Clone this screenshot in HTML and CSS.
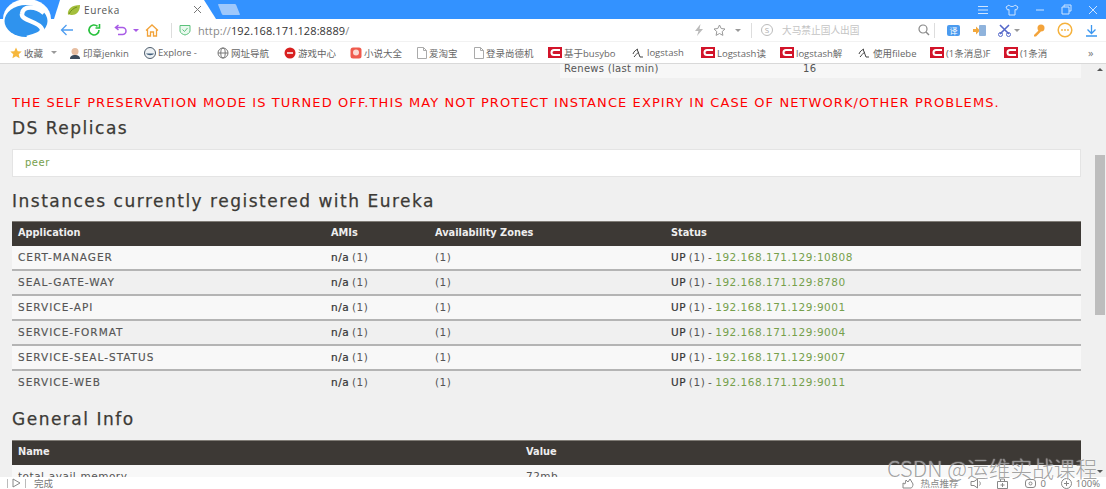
FILE: index.html
```html
<!DOCTYPE html>
<html lang="zh">
<head>
<meta charset="utf-8">
<title>Eureka</title>
<link rel="stylesheet" href="styles.css">
</head>
<body>
<div class="browser">
  <svg class="logo" viewBox="0 0 48 40" width="48" height="40"><ellipse cx="24" cy="19" rx="24" ry="20" fill="#fff"/><ellipse cx="23" cy="21" rx="21.500" ry="16" fill="#2f93ee"/><path d="M41 13C33 6 20 5 19 14 18 21 36 21 39 29 40 33 33 36 24 38" fill="none" stroke="#fff" stroke-width="4.500"/></svg>
  <header class="tabbar">
    <div class="tab">
      <svg class="tab-icon" viewBox="0 0 14 12" width="14" height="12"><path d="M1 11C0 5 5 1 13 1c0 7-4 10-8 10-2 0-3-1-4 0z" fill="#a4bf3c"/><path d="M2 10C4 6 7 4 10 3" stroke="#6f8f1e" fill="none"/></svg>
      <span class="tab-title">Eureka</span>
      <svg class="tab-close" viewBox="0 0 9 9" width="9" height="9"><path d="M1 1l7 7M8 1L1 8" stroke="#777" stroke-width="1"/></svg>
    </div>
    <div class="newtab"></div>
    <div class="window-controls">
      <svg viewBox="0 0 12 10" width="12" height="10"><path d="M1 1.500h10M1 5h10M1 8.500h10" stroke="#cfe5ff"/></svg>
      <svg viewBox="0 0 14 12" width="14" height="12"><path d="M4 1L1 3l1.500 3L4 5.500V11h6V5.500l1.500.5L13 3l-3-2c-1 2-5 2-6 0z" fill="none" stroke="#cfe5ff"/></svg>
      <svg viewBox="0 0 10 10" width="10" height="10"><path d="M1 5h8" stroke="#cfe5ff"/></svg>
      <svg viewBox="0 0 11 11" width="11" height="11"><path d="M3 3V1h7v6H8M1 3h7v7H1z" fill="none" stroke="#cfe5ff"/></svg>
      <svg viewBox="0 0 10 10" width="10" height="10"><path d="M1 1l8 8M9 1L1 9" stroke="#cfe5ff"/></svg>
    </div>
  </header>
  <nav class="toolbar">
    <div class="nav-icons">
      <svg viewBox="0 0 14 12" width="14" height="12"><path d="M13 6H2M6.500 1L1.500 6l5 5" fill="none" stroke="#4f9df0" stroke-width="1.300"/></svg>
      <svg viewBox="0 0 14 14" width="14" height="14"><path d="M12 7a5 5 0 1 1-1.500-3.600" fill="none" stroke="#27c13c" stroke-width="1.600"/><path d="M12.500 1v4h-4" fill="none" stroke="#27c13c" stroke-width="1.600"/></svg>
      <span class="undo"><svg viewBox="0 0 14 12" width="14" height="12"><path d="M4.500 1L1.500 3.500 4.500 6M2 3.500h6.500a3.500 3.500 0 0 1 0 7H4" fill="none" stroke="#a85be6" stroke-width="1.500"/></svg><i class="mini-arrow purple"></i></span>
      <svg class="home" viewBox="0 0 14 13" width="14" height="13"><path d="M1 6.500L7 1l6 5.500M2.500 5.500V12h3V8h3v4h3V5.500" fill="none" stroke="#f2a33a" stroke-width="1.300"/></svg>
    </div>
    <div class="address">
      <svg viewBox="0 0 12 12" width="12" height="12"><path d="M1 1.500h10V7c0 2-3 3.500-5 4C4 10.500 1 9 1 7z" fill="#e9f8ee" stroke="#5cc27c"/><path d="M3.500 5.500L5.500 7.500 8.500 4" fill="none" stroke="#5cc27c"/></svg>
      <span class="url"><span class="url-scheme">http://</span>192.168.171.128:8889<span class="url-scheme">/</span></span>
    </div>
    <div class="addr-right">
      <svg viewBox="0 0 10 12" width="10" height="12"><path d="M6.500 0L1 7h3.500L3 12l6-7H5.500z" fill="#bbb"/></svg>
      <svg viewBox="0 0 13 12" width="13" height="12"><path d="M6.500 1l1.700 3.500 3.800.5-2.800 2.600.7 3.800-3.400-1.900-3.400 1.900.7-3.800L1 5l3.800-.5z" fill="none" stroke="#999"/></svg>
      <i class="mini-arrow"></i>
    </div>
    <div class="search">
      <span class="search-s">S</span>
      <span class="search-text">大马禁止国人出国</span>
      <svg viewBox="0 0 12 12" width="12" height="12"><circle cx="5" cy="5" r="4" fill="none" stroke="#888" stroke-width="1.200"/><path d="M8 8l3 3" stroke="#888" stroke-width="1.400"/></svg>
    </div>
    <div class="tools">
      <span class="tool-translate">译</span>
      <svg viewBox="0 0 14 13" width="14" height="13"><path d="M1 5h3V2.500L8 6.500l-4 4V8H1z" fill="#f3a83c"/><rect x="7" y="1" width="7" height="11" rx="1" fill="#8fb3dc"/></svg>
      <span class="undo"><svg viewBox="0 0 13 13" width="13" height="13"><path d="M2 1l9 9M11 1l-9 9" stroke="#5568c9" stroke-width="1.600"/><circle cx="2.500" cy="10.500" r="2" fill="none" stroke="#5568c9"/><circle cx="10.500" cy="10.500" r="2" fill="none" stroke="#5568c9"/></svg><i class="mini-arrow"></i></span>
      <svg viewBox="0 0 13 13" width="13" height="13"><circle cx="9" cy="4" r="3.500" fill="#f3a33a"/><path d="M7 6l-5 5v1.500h2l5-5" fill="#f3a33a"/></svg>
      <svg viewBox="0 0 16 16" width="16" height="16"><circle cx="8" cy="8" r="6.800" fill="#fff" stroke="#f5b23d" stroke-width="1.500"/><circle cx="5" cy="8" r=".9" fill="#f5b23d"/><circle cx="8" cy="8" r=".9" fill="#f5b23d"/><circle cx="11" cy="8" r=".9" fill="#f5b23d"/></svg>
      <svg viewBox="0 0 13 13" width="13" height="13"><path d="M6.500 1v8M2.500 5.500l4 4 4-4M1 12h11" fill="none" stroke="#3a96f0" stroke-width="1.300"/></svg>
    </div>
  </nav>
  <nav class="bookmarks">
    <span class="bm bm-fav"><svg viewBox="0 0 12 12" width="12" height="12"><path d="M6 .5l1.700 3.700 4 .4-3 2.700.9 4L6 9.300 2.400 11.300l.9-4-3-2.700 4-.4z" fill="#f6b73c"/></svg>收藏<i class="mini-arrow"></i></span>
    <span class="bm bm-a"><svg viewBox="0 0 12 12" width="12" height="12"><circle cx="6" cy="4.500" r="3.500" fill="#e6bda0"/><path d="M1 12c0-3 2-4 5-4s5 1 5 4z" fill="#3c4a5a"/></svg>印章jenkin</span>
    <span class="bm bm-b"><svg viewBox="0 0 12 12" width="12" height="12"><circle cx="6" cy="6" r="5.500" fill="#eef2f5" stroke="#4d5c6b"/><path d="M2 6.500h8c-1 2-6 2.500-8 0z" fill="#3f5d7a"/></svg>Explore -</span>
    <span class="bm bm-c"><svg viewBox="0 0 12 12" width="12" height="12"><circle cx="6" cy="6" r="5" fill="none" stroke="#777"/><ellipse cx="6" cy="6" rx="2.200" ry="5" fill="none" stroke="#777"/><path d="M1 6h10" stroke="#777"/></svg>网址导航</span>
    <span class="bm bm-d"><svg viewBox="0 0 12 12" width="12" height="12"><circle cx="6" cy="6" r="5.500" fill="#d8201f"/><path d="M3 6h6" stroke="#fff" stroke-width="1.500"/></svg>游戏中心</span>
    <span class="bm bm-e"><svg viewBox="0 0 12 12" width="12" height="12"><rect x=".5" y=".5" width="11" height="11" rx="2.500" fill="#ef5a4d"/><circle cx="6" cy="5.500" r="3" fill="#fbd9d2"/></svg>小说大全</span>
    <span class="bm bm-f"><svg viewBox="0 0 10 12" width="10" height="12"><path d="M.5.500h6l3 3v8h-9zM6.500.5v3h3" fill="#fff" stroke="#aaa"/></svg>爱淘宝</span>
    <span class="bm bm-g"><svg viewBox="0 0 10 12" width="10" height="12"><path d="M.5.500h6l3 3v8h-9zM6.500.5v3h3" fill="#fff" stroke="#aaa"/></svg>登录尚德机</span>
    <span class="bm bm-h"><svg viewBox="0 0 14 11" width="14" height="11"><rect width="14" height="11" fill="#d2142a"/><path d="M12 3H6a2.500 2.500 0 0 0 0 5h6" fill="none" stroke="#fff" stroke-width="2"/></svg>基于busybo</span>
    <span class="bm bm-i"><svg viewBox="0 0 13 12" width="13" height="12"><path d="M1 7c1-3 3-4 5-5M5 2l3 8h3M7 5c-2 1-4 4-5 5" fill="none" stroke="#444"/></svg>logstash</span>
    <span class="bm bm-j"><svg viewBox="0 0 14 11" width="14" height="11"><rect width="14" height="11" fill="#d2142a"/><path d="M12 3H6a2.500 2.500 0 0 0 0 5h6" fill="none" stroke="#fff" stroke-width="2"/></svg>Logstash读</span>
    <span class="bm bm-k"><svg viewBox="0 0 14 11" width="14" height="11"><rect width="14" height="11" fill="#d2142a"/><path d="M12 3H6a2.500 2.500 0 0 0 0 5h6" fill="none" stroke="#fff" stroke-width="2"/></svg>logstash解</span>
    <span class="bm bm-l"><svg viewBox="0 0 13 12" width="13" height="12"><path d="M1 7c1-3 3-4 5-5M5 2l3 8h3M7 5c-2 1-4 4-5 5" fill="none" stroke="#444"/></svg>使用filebe</span>
    <span class="bm bm-m"><svg viewBox="0 0 14 11" width="14" height="11"><rect width="14" height="11" fill="#d2142a"/><path d="M12 3H6a2.500 2.500 0 0 0 0 5h6" fill="none" stroke="#fff" stroke-width="2"/></svg>(1条消息)F</span>
    <span class="bm bm-n"><svg viewBox="0 0 14 11" width="14" height="11"><rect width="14" height="11" fill="#d2142a"/><path d="M12 3H6a2.500 2.500 0 0 0 0 5h6" fill="none" stroke="#fff" stroke-width="2"/></svg>(1条消</span>
    <span class="bm-more">»</span>
  </nav>
  <div class="viewport">
    <main class="page">
      <div class="renews"><span class="renews-name">Renews (last min)</span><span>16</span></div>
      <h4 class="warning">THE SELF PRESERVATION MODE IS TURNED OFF.THIS MAY NOT PROTECT INSTANCE EXPIRY IN CASE OF NETWORK/OTHER PROBLEMS.</h4>
      <h1 class="heading heading-ds">DS Replicas</h1>
      <div class="well"><a class="link">peer</a></div>
      <h1 class="heading heading-inst">Instances currently registered with Eureka</h1>
      <table class="data">
        <thead><tr><th class="c-app">Application</th><th class="c-ami">AMIs</th><th class="c-az">Availability Zones</th><th>Status</th></tr></thead>
        <tbody>
          <tr><td class="name">CERT-MANAGER</td><td><b>n/a</b> (1)</td><td>(1)</td><td><b>UP</b> (1) - <a class="link">192.168.171.129:10808</a></td></tr>
          <tr><td class="name">SEAL-GATE-WAY</td><td><b>n/a</b> (1)</td><td>(1)</td><td><b>UP</b> (1) - <a class="link">192.168.171.129:8780</a></td></tr>
          <tr><td class="name">SERVICE-API</td><td><b>n/a</b> (1)</td><td>(1)</td><td><b>UP</b> (1) - <a class="link">192.168.171.129:9001</a></td></tr>
          <tr><td class="name">SERVICE-FORMAT</td><td><b>n/a</b> (1)</td><td>(1)</td><td><b>UP</b> (1) - <a class="link">192.168.171.129:9004</a></td></tr>
          <tr><td class="name">SERVICE-SEAL-STATUS</td><td><b>n/a</b> (1)</td><td>(1)</td><td><b>UP</b> (1) - <a class="link">192.168.171.129:9007</a></td></tr>
          <tr><td class="name">SERVICE-WEB</td><td><b>n/a</b> (1)</td><td>(1)</td><td><b>UP</b> (1) - <a class="link">192.168.171.129:9011</a></td></tr>
        </tbody>
      </table>
      <h1 class="heading heading-gen">General Info</h1>
      <table class="data data-info">
        <thead><tr><th class="c-name">Name</th><th>Value</th></tr></thead>
        <tbody><tr><td>total-avail-memory</td><td>72mb</td></tr></tbody>
      </table>
    </main>
    <aside class="scrollbar"><i class="arrow-up"></i><div class="thumb"></div><i class="arrow-down"></i></aside>
  </div>
  <footer class="statusbar">
    <i class="status-sep"></i>
    <svg viewBox="0 0 9 10" width="9" height="10"><path d="M1 1l7 4-7 4z" fill="none" stroke="#888"/></svg>
    <i class="status-sep"></i>
    <span class="status-done">完成</span>
    <div class="status-right">
      <svg class="s-hot" viewBox="0 0 12 11" width="12" height="11"><path d="M1 10V5l2 1 1-4 2 2 2-3 3 5c0 2-1 4-2 4z" fill="none" stroke="#888"/></svg>
      <span class="status-hot">热点推荐</span>
      <svg class="s-sound" viewBox="0 0 13 11" width="13" height="11"><path d="M1 3.500h3L7.500 1v9L4 7.500H1zM9.500 3.500c1 1 1 3 0 4" fill="none" stroke="#888"/></svg>
      <svg class="s-box" viewBox="0 0 11 11" width="11" height="11"><path d="M.5 3.500h10v7H.5zM3.500 3.500V1h4v2.500M5.500 5v4M3.500 7h4" fill="none" stroke="#888"/></svg>
      <span class="status-item s-count"><svg viewBox="0 0 11 11" width="11" height="11"><rect x=".5" y="1.500" width="10" height="8" rx="2.500" fill="none" stroke="#888"/><circle cx="5.500" cy="5.500" r="1.500" fill="none" stroke="#888"/></svg>0</span>
      <span class="status-item s-zoom"><svg viewBox="0 0 11 11" width="11" height="11"><circle cx="5.500" cy="5.500" r="5" fill="none" stroke="#888"/><path d="M5.500 3v5M3 5.500h5" stroke="#888"/></svg>100%</span>
    </div>
  </footer>
  <div class="watermark">CSDN @运维实战课程</div>
</div>
</body>
</html>
```
FILE: styles.css
```css
* { box-sizing: border-box; }
html, body { margin: 0; height: 100%; overflow: hidden; }
body { font-family: "Open Sans", "Noto Sans CJK SC", sans-serif; color: #444; }
.browser { position: relative; width: 1106px; height: 489px; display: flex; flex-direction: column; background: #fff; overflow: hidden; }
.logo { position: absolute; left: 3px; top: 0; z-index: 3; }

.tabbar { height: 19px; background: #3392ff; display: flex; align-items: flex-end; padding-left: 54px; flex: none; }
.tab { width: 162px; height: 19px; background: #fff; clip-path: polygon(0 100%, 6px 0, 150px 0, 162px 100%); display: flex; align-items: center; padding: 0 14px 0 13px; font-size: 10px; color: #555; }
.tab-icon { margin-right: 3px; flex: none; }
.tab-title { flex: 1; letter-spacing: .6px; }
.newtab { width: 18px; height: 11px; margin: 0 0 4px 4px; align-self: flex-end; background: #9ec8fb; transform: skewX(22deg); border-radius: 1px; }
.window-controls { margin-left: auto; display: flex; align-items: center; gap: 16px; height: 19px; padding-right: 8px; }

.toolbar { height: 23px; flex: none; display: flex; align-items: center; background: #fff; border-bottom: 1px solid #f2f2f2; }
.nav-icons { display: flex; align-items: center; gap: 13px; padding-left: 60px; width: 172px; border-right: 1px solid #ddd; height: 15px; }
.home { margin-left: -7px; }
.undo { display: inline-flex; align-items: center; gap: 3px; }
.mini-arrow { display: inline-block; width: 0; height: 0; border: 3px solid transparent; border-top-color: #999; border-bottom: 0; }
.mini-arrow.purple { border-top-color: #a85be6; margin-left: 2px; }
.address { display: flex; align-items: center; gap: 7px; padding-left: 7px; width: 522px; }
.url { font-size: 11px; color: #333; letter-spacing: .1px; }
.url-scheme { color: #888; }
.addr-right { display: flex; align-items: center; gap: 9px; width: 58px; border-right: 1px solid #ddd; height: 15px; padding-left: 0; }
.search { display: flex; align-items: center; width: 183px; padding: 0 0 0 9px; border-right: 1px solid #ddd; height: 15px; }
.search-s { width: 12px; height: 12px; border: 1px solid #bbb; border-radius: 50%; font-size: 8px; line-height: 10px; text-align: center; color: #aaa; }
.search-text { font-size: 9.700px; color: #c4c4c4; margin-left: 9px; width: 136px; }
.tools { display: flex; align-items: center; gap: 12px; padding-left: 12px; }
.tool-translate { width: 13px; height: 11px; border-radius: 2px; background: #4b9bef; color: #fff; font-size: 8px; line-height: 11px; text-align: center; }

.bookmarks { height: 22px; flex: none; position: relative; display: flex; align-items: center; background: #fff; border-bottom: 1px solid #d9d9d9; font-size: 9.500px; color: #666; white-space: nowrap; }
.bm { display: inline-flex; align-items: center; gap: 2px; flex: none; }
.bm .mini-arrow { margin-left: 6px; }
.bm-fav { margin-left: 10px; width: 59px; }
.bm-a { width: 75px; }
.bm-b { width: 73px; }
.bm-c { width: 67px; }
.bm-d { width: 66px; }
.bm-e { width: 67px; }
.bm-f { width: 57px; }
.bm-g { width: 74px; }
.bm-h { width: 84px; }
.bm-i { width: 69px; }
.bm-j { width: 79px; }
.bm-k { width: 78px; }
.bm-l { width: 72px; }
.bm-m { width: 74px; }
.bm-n { width: 74px; }
.bm-more { font-size: 11px; margin-left: 10px; color: #777; }

.viewport { flex: 1; min-height: 0; display: flex; background: #f0f0f0; overflow: hidden; }
.page { flex: 1; min-width: 0; padding: 0 13px 0 12px; height: 413px; overflow: hidden; font-family: "DejaVu Sans", sans-serif; }
.renews { margin-left: 548px; background: #f7f7f7; height: 14px; display: flex; font-size: 10px; line-height: 9px; letter-spacing: .3px; color: #555; padding-left: 4px; overflow: hidden; }
.renews-name { width: 239px; }

.warning { margin: 18px 0 0; height: 14px; color: #f00; font-size: 13px; line-height: 14px; font-weight: 400; white-space: nowrap; font-family: "DejaVu Sans", sans-serif; letter-spacing: 1.090px; }
.heading { margin: 0; font-weight: 400; color: #3c3a36; font-family: "DejaVu Sans", sans-serif; font-size: 17px; line-height: 20px; letter-spacing: 1.500px; -webkit-text-stroke: .25px #3c3a36; }
.heading-ds { margin-top: 8px; }
.heading-inst { margin-top: 14px; }
.heading-gen { margin-top: 13px; }
.well { margin-top: 11px; height: 28px; background: #fff; border: 1px solid #e4e4e4; padding: 0 12px; font-size: 10px; letter-spacing: .5px; line-height: 26px; }
.link { color: #76a04c; }

.data { width: 100%; margin-top: 10px; border-collapse: separate; border-spacing: 0; table-layout: fixed; font-size: 10.500px; letter-spacing: .5px; word-spacing: -1px; color: #555; }
.data-info { margin-top: 11px; }
.data th { height: 25px; background: #3d3935; border-top: 1px solid #807c76; color: #eee; text-align: left; padding: 0 6px 3px; font-size: 9.800px; font-weight: 700; letter-spacing: 0; word-spacing: 0; font-family: "DejaVu Sans", sans-serif; }
.data td { height: 25px; padding: 0 6px 2px; border-bottom: 2px solid #b4b4b4; white-space: nowrap; }
.data tr:nth-child(odd) td { background: #f8f8f8; }
.data tr:nth-child(even) td { background: #f0f0f0; }
.data tr:last-child td { border-bottom: 0; padding-bottom: 4px; }
.data b { font-weight: 400; color: #333; -webkit-text-stroke: .2px #333; }
.c-app { width: 313px; }
.c-ami { width: 104px; }
.c-az { width: 236px; }
.c-name { width: 508px; }
.name { letter-spacing: 1px; -webkit-text-stroke: .15px #555; }

.scrollbar { width: 12px; flex: none; position: relative; background: #f0f0f0; }
.thumb { position: absolute; left: 1px; right: 1px; top: 91px; height: 160px; background: #bdbdbd; }
.arrow-up, .arrow-down { position: absolute; left: 3px; width: 0; height: 0; border: 3px solid transparent; }
.arrow-up { top: 4px; border-bottom-color: #555; border-top: 0; }
.arrow-down { bottom: 4px; border-top-color: #555; border-bottom: 0; }

.statusbar { height: 12px; flex: none; background: #fff; display: flex; align-items: center; gap: 4px; padding: 0 6px 0 7px; font-size: 9.500px; color: #777; }
.status-sep { width: 1px; height: 9px; background: #bbb; }
.status-done { margin-left: 4px; }
.status-right { margin-left: auto; display: flex; align-items: center; }
.status-hot { margin-left: 6px; color: #888; }
.s-sound { margin-left: 12px; }
.s-box { margin-left: 14px; }
.s-count { margin-left: 17px; }
.s-zoom { margin-left: 15px; }
.status-item { display: inline-flex; align-items: center; gap: 4px; }

.watermark { position: absolute; left: 887px; top: 455px; font-family: "Noto Sans CJK SC", sans-serif; font-size: 21.700px; font-weight: 300; line-height: 26px; color: rgba(110,110,110,.65); white-space: nowrap; text-shadow: 0 0 1px #fff; z-index: 4; }
```
